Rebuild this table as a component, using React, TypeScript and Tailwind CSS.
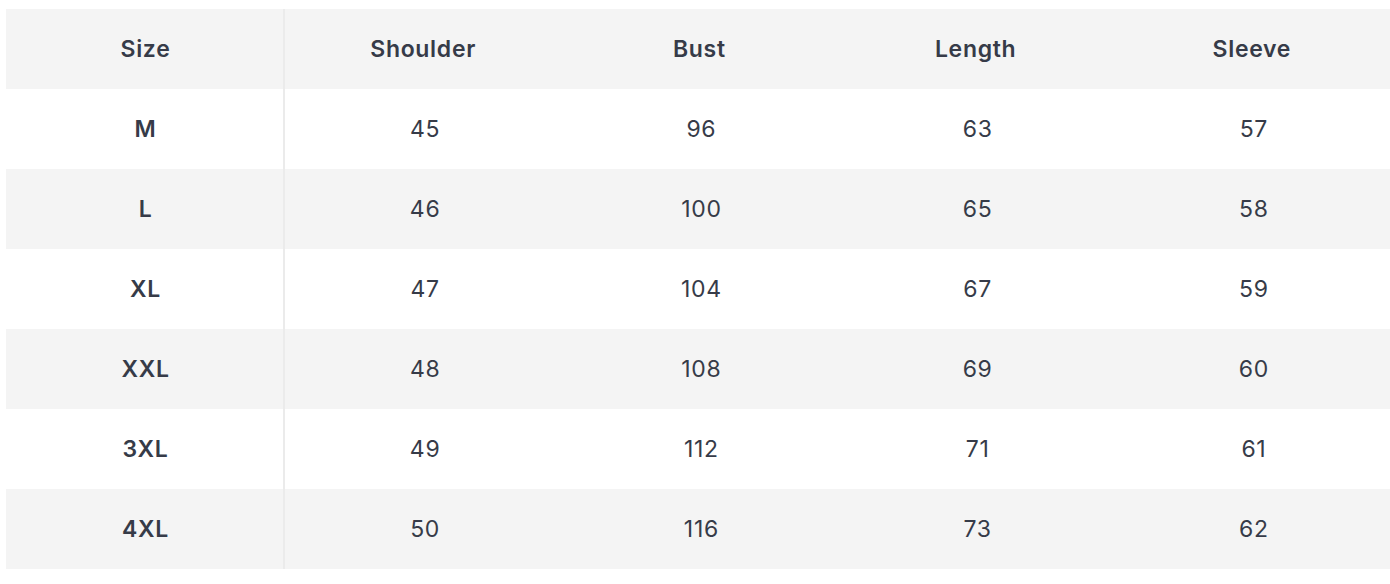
const headers = ['Size', 'Shoulder', 'Bust', 'Length', 'Sleeve'];

const rows: [string, number, number, number, number][] = [
  ['M', 45, 96, 63, 57],
  ['L', 46, 100, 65, 58],
  ['XL', 47, 104, 67, 59],
  ['XXL', 48, 108, 69, 60],
  ['3XL', 49, 112, 71, 61],
  ['4XL', 50, 116, 73, 62],
];

export default function App() {
  return (
    <div
      className="min-h-screen bg-white pt-[9px] pl-[6px] text-[#363b48]"
      style={{ fontFamily: 'Inter, "Noto Sans", sans-serif' }}
    >
      <div className="w-[1384px]">
        <div className="grid grid-cols-[279px_repeat(4,1fr)] h-[80px] bg-[#f4f4f4]">
          {headers.map((h, i) => (
            <div
              key={h}
              className={`flex items-center justify-center text-[23px] tracking-[0.03em] font-semibold ${i === 0 ? 'border-r-2 border-[#ebebeb] pl-[2px]' : ''}`}
            >
              {h}
            </div>
          ))}
        </div>
        {rows.map((r, ri) => (
          <div
            key={r[0]}
            className={`grid grid-cols-[279px_repeat(4,1fr)] h-[80px] ${ri % 2 === 1 ? 'bg-[#f4f4f4]' : 'bg-white'}`}
          >
            {r.map((c, i) => (
              <div
                key={i}
                className={`flex items-center justify-center text-[23px] tracking-[0.03em] ${i === 0 ? 'font-semibold border-r-2 border-[#ebebeb] pl-[2px]' : 'font-normal pl-[4px]'}`}
              >
                {c}
              </div>
            ))}
          </div>
        ))}
      </div>
    </div>
  );
}
